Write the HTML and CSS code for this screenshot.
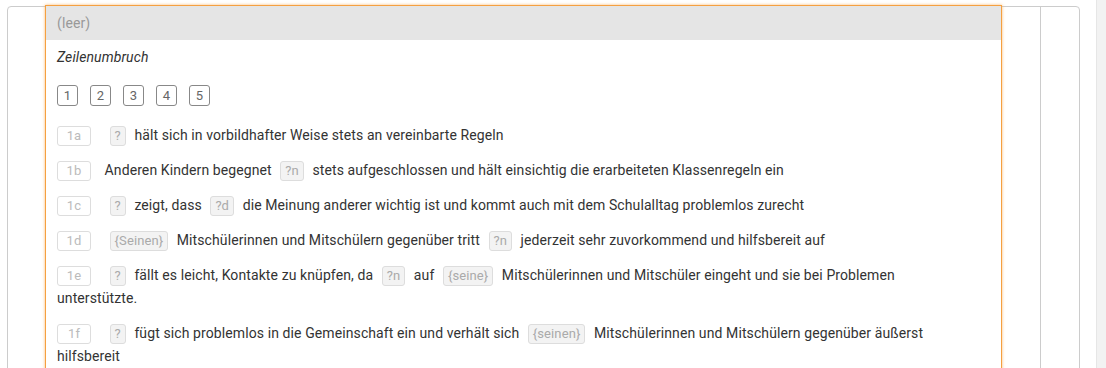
FILE: index.html
```html
<!DOCTYPE html>
<html lang="de">
<head>
    <meta charset="UTF-8">
    <meta name="viewport" content="width=device-width, initial-scale=1.0">
    <title>Textbausteine</title>
    <link rel="stylesheet" href="styles.css">
</head>
<body>
    <div class="page">
        <div class="main">
            <div class="card">
                <div class="side-left"></div>
                <div class="field">
                    <div class="field-head">(leer)</div>
                    <div class="editor">
                        <p class="hint">Zeilenumbruch</p>
                        <div class="levels">
                            <span class="level">1</span>
                            <span class="level">2</span>
                            <span class="level">3</span>
                            <span class="level">4</span>
                            <span class="level">5</span>
                        </div>
                        <div class="rows">
                            <div class="row"><span class="num">1a</span> <span class="ph">?</span> hält sich in vorbildhafter Weise stets an vereinbarte Regeln</div>
                            <div class="row"><span class="num">1b</span> Anderen Kindern begegnet <span class="ph">?n</span> stets aufgeschlossen und hält einsichtig die erarbeiteten Klassenregeln ein</div>
                            <div class="row"><span class="num">1c</span> <span class="ph">?</span> zeigt, dass <span class="ph">?d</span> die Meinung anderer wichtig ist und kommt auch mit dem Schulalltag problemlos zurecht</div>
                            <div class="row"><span class="num">1d</span> <span class="ph">{Seinen}</span> Mitschülerinnen und Mitschülern gegenüber tritt <span class="ph">?n</span> jederzeit sehr zuvorkommend und hilfsbereit auf</div>
                            <div class="row"><span class="num">1e</span> <span class="ph">?</span> fällt es leicht, Kontakte zu knüpfen, da <span class="ph">?n</span> auf <span class="ph">{seine}</span> Mitschülerinnen und Mitschüler eingeht und sie bei Problemen unterstützte.</div>
                            <div class="row"><span class="num">1f</span> <span class="ph">?</span> fügt sich problemlos in die Gemeinschaft ein und verhält sich <span class="ph">{seinen}</span> Mitschülerinnen und Mitschülern gegenüber äußerst hilfsbereit</div>
                        </div>
                    </div>
                </div>
                <div class="side-gap"></div>
                <div class="side-right"></div>
            </div>
        </div>
        <div class="scroll"></div>
    </div>
</body>
</html>
```

FILE: styles.css
```css
html, body {
    margin: 0;
    height: 100%;
    overflow: hidden;
}
body {
    font-family: Roboto, "Liberation Sans", Arial, sans-serif;
    font-size: 14px;
    letter-spacing: 0.1px;
    color: #333;
    background-color: #fff;
}
.page {
    display: flex;
    height: 100%;
}
.main {
    flex: 1;
    padding: 6px 16px 0 7px;
}
.scroll {
    width: 9px;
    background-color: #f2f2f2;
    border-left: 1px solid #e6e6e6;
}
.card {
    display: flex;
    align-items: flex-start;
    border: 1px solid #ccc;
    border-radius: 4px;
    height: 420px;
}
.side-left {
    width: 37px;
}
.field {
    width: 955px;
    margin-top: -2px;
    border: 1px solid #f5a040;
    box-shadow: 0 0 3px rgba(247, 160, 60, 0.7);
    height: 430px;
}
.side-gap {
    width: 38px;
}
.side-right {
    width: 38px;
    height: 100%;
    border-left: 1px solid #ccc;
}
.field-head {
    background-color: #e5e5e5;
    color: #999;
    height: 34px;
    line-height: 34px;
    padding-left: 11px;
}
.editor {
    padding: 0 40px 0 11px;
}
.hint {
    font-style: italic;
    margin: 7px 0 0;
    line-height: 20px;
}
.levels {
    display: flex;
    gap: 12px;
    margin-top: 18px;
}
.level {
    width: 21px;
    height: 21px;
    box-sizing: border-box;
    border: 1px solid #888;
    border-radius: 3px;
    color: #666;
    font-size: 13px;
    display: flex;
    align-items: center;
    justify-content: center;
}
.rows {
    margin-top: 18px;
}
.row {
    line-height: 23px;
    margin-bottom: 12px;
}
.num {
    display: inline-block;
    width: 34px;
    box-sizing: border-box;
    line-height: 18px;
    border: 1px solid #ddd;
    border-radius: 3px;
    color: #bbb;
    font-size: 13px;
    text-align: center;
    margin-right: 10px;
}
.ph {
    display: inline-block;
    line-height: 18px;
    padding: 0 4px;
    border: 1px solid #ddd;
    border-radius: 3px;
    background-color: #f3f3f3;
    color: #aaa;
    font-size: 13px;
    margin: 0 5px;
}
```
